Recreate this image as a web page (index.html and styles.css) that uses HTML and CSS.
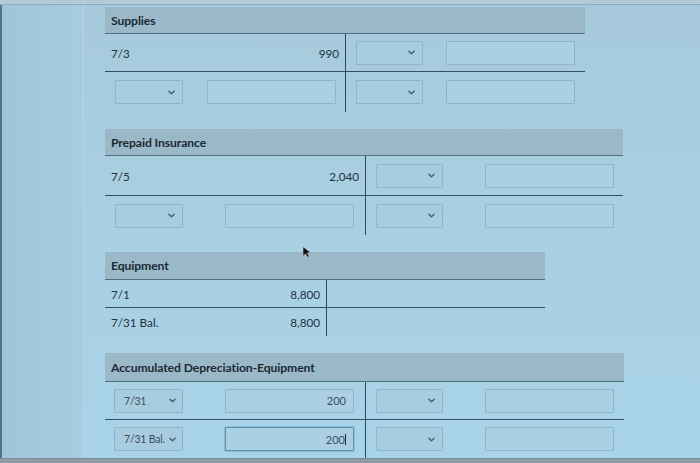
FILE: index.html
```html
<!DOCTYPE html>
<html>
<head>
<meta charset="utf-8">
<link rel="stylesheet" href="styles.css">
</head>
<body>
<div class="screen">
  <div class="topbar"></div>
  <div class="frame">
    <div class="rail"></div>
    <main class="content">

      <section class="acct acct-supplies">
        <div class="head">Supplies</div>
        <div class="cell left text"><span>7/3</span><span>990</span></div>
        <div class="cell right ctrls">
          <div class="sel"><span></span><svg viewBox="0 0 8 5"><path d="M1 1l3 3 3-3"/></svg></div>
          <div class="inp"></div>
        </div>
        <div class="cell left ctrls last">
          <div class="sel"><span></span><svg viewBox="0 0 8 5"><path d="M1 1l3 3 3-3"/></svg></div>
          <div class="inp"></div>
        </div>
        <div class="cell right ctrls last">
          <div class="sel"><span></span><svg viewBox="0 0 8 5"><path d="M1 1l3 3 3-3"/></svg></div>
          <div class="inp"></div>
        </div>
      </section>

      <section class="acct acct-prepaid">
        <div class="head">Prepaid Insurance</div>
        <div class="cell left text"><span>7/5</span><span>2,040</span></div>
        <div class="cell right ctrls">
          <div class="sel"><span></span><svg viewBox="0 0 8 5"><path d="M1 1l3 3 3-3"/></svg></div>
          <div class="inp"></div>
        </div>
        <div class="cell left ctrls last">
          <div class="sel"><span></span><svg viewBox="0 0 8 5"><path d="M1 1l3 3 3-3"/></svg></div>
          <div class="inp"></div>
        </div>
        <div class="cell right ctrls last">
          <div class="sel"><span></span><svg viewBox="0 0 8 5"><path d="M1 1l3 3 3-3"/></svg></div>
          <div class="inp"></div>
        </div>
      </section>

      <section class="acct acct-equip">
        <div class="head">Equipment</div>
        <div class="cell left text"><span>7/1</span><span>8,800</span></div>
        <div class="cell right"></div>
        <div class="cell left text last"><span>7/31 Bal.</span><span>8,800</span></div>
        <div class="cell right last"></div>
        <svg class="pointer" viewBox="0 0 10 14"><path d="M1 1v11l3-3 2 4 2-1-2-4h4z"/></svg>
      </section>

      <section class="acct acct-accum">
        <div class="head">Accumulated Depreciation-Equipment</div>
        <div class="cell left ctrls">
          <div class="sel"><span>7/31</span><svg viewBox="0 0 8 5"><path d="M1 1l3 3 3-3"/></svg></div>
          <div class="inp num">200</div>
        </div>
        <div class="cell right ctrls">
          <div class="sel"><span></span><svg viewBox="0 0 8 5"><path d="M1 1l3 3 3-3"/></svg></div>
          <div class="inp"></div>
        </div>
        <div class="cell left ctrls last">
          <div class="sel"><span>7/31 Bal.</span><svg viewBox="0 0 8 5"><path d="M1 1l3 3 3-3"/></svg></div>
          <div class="inp num focus">200<i class="caret"></i></div>
        </div>
        <div class="cell right ctrls last">
          <div class="sel"><span></span><svg viewBox="0 0 8 5"><path d="M1 1l3 3 3-3"/></svg></div>
          <div class="inp"></div>
        </div>
      </section>

    </main>
  </div>
  <div class="bottombar"></div>
</div>
</body>
</html>
```

FILE: styles.css
```css
* { box-sizing: border-box; }

html, body {
  margin: 0;
  padding: 0;
  width: 700px;
  height: 463px;
  overflow: hidden;
}

body {
  font-family: Lato, "Open Sans", "Liberation Sans", sans-serif;
  color: #1a2a34;
  background: #a8cfe2;
}

.screen {
  width: 700px;
  height: 463px;
  display: flex;
  flex-direction: column;
  background: linear-gradient(180deg, #a6cadc 0%, #a9d0e3 55%, #a8d3e9 100%);
}

.topbar {
  height: 5px;
  flex: none;
  background: #b3cbd7;
  border-bottom: 1px solid #8eaab8;
}

.frame {
  flex: 1;
  display: flex;
  min-height: 0;
}

.rail {
  width: 84px;
  flex: none;
  border-left: 2px solid #4f778c;
  border-right: 1px solid #b9d8e6;
  background: linear-gradient(90deg, #a1c5d8 0%, #a7cce0 100%);
}

.content {
  flex: 1;
  padding: 2px 0 0 21px;
  display: flex;
  flex-direction: column;
  gap: 17px;
}

.bottombar {
  height: 5px;
  flex: none;
  background: #8d9ca4;
  border-top: 1px solid #7d8d95;
}

/* ---- T-account ---- */
.acct {
  position: relative;
  display: grid;
  grid-template-columns: var(--lw) var(--rw);
  --sel-w: 67px;
  --inp-w: 129px;
  --gap: 42px;
}

.head {
  grid-column: 1 / 3;
  height: 27px;
  display: flex;
  align-items: center;
  padding-left: 6px;
  font-weight: 700;
  font-size: 12.2px;
  background: #9ab8c7;
  border-bottom: 1px solid #4f6e7e;
  letter-spacing: -0.1px;
}

.cell {
  display: flex;
  align-items: center;
  font-size: 11.7px;
  color: #22333d;
  border-bottom: 1px solid #34515f;
  white-space: nowrap;
}

.cell.last { border-bottom: none; }

.cell.right { border-left: 1px solid #2e4957; }

.cell.text {
  justify-content: space-between;
  padding: 0 6px 0 6px;
}

.cell.ctrls {
  padding-left: 10px;
  gap: var(--gap);
}

.sel {
  width: var(--sel-w);
  height: 24px;
  border: 1px solid #8fb5c7;
  background: #a9cde0;
  border-radius: 1px;
  display: flex;
  align-items: center;
  justify-content: space-between;
  padding: 0 7px 0 9px;
  font-size: 10.5px;
  color: #3a4f5b;
  white-space: nowrap;
}

.sel svg {
  flex: none;
  width: 7px;
  height: 5px;
  fill: none;
  stroke: #3a5f75;
  stroke-width: 1.5;
  stroke-linecap: round;
  stroke-linejoin: round;
}

.inp {
  width: var(--inp-w);
  height: 24px;
  border: 1px solid #8fb5c7;
  background: #acd0e3;
  border-radius: 1px;
  font-size: 11px;
  color: #3a4f5b;
}

.inp.num {
  display: flex;
  align-items: center;
  justify-content: flex-end;
  padding-right: 7px;
}

.inp.focus {
  border-color: #5c93b5;
  box-shadow: 0 0 0 1px #8ebcd6;
}

.caret {
  display: inline-block;
  width: 1px;
  height: 11px;
  background: #1a2a34;
}

/* per-account sizes */
.acct-supplies { --lw: 240px; --rw: 240px; }
.acct-supplies .cell { height: 38px; }
.acct-supplies .cell.last { height: 40px; }
.acct-supplies .cell.right.ctrls { --gap: 23px; }
.acct-supplies .cell.left.ctrls { --gap: 24px; }
.acct-supplies .cell.left.ctrls .sel { width: 68px; }

.acct-prepaid { --lw: 260px; --rw: 258px; }
.acct-prepaid .cell { height: 40px; }
.acct-prepaid .cell.last { height: 39px; }
.acct-prepaid .cell.left.ctrls .sel { width: 68px; }

.acct-equip { --lw: 221px; --rw: 219px; }
.acct-equip .head { height: 28px; }
.acct-equip .cell { height: 28px; }

.acct-accum { --lw: 260px; --rw: 259px; }
.acct-accum .head { height: 29px; }
.acct-accum .cell { height: 38px; }
.acct-accum .cell.left.ctrls { padding-left: 9px; --gap: 42px; }
.acct-accum .cell.left.ctrls .sel { width: 69px; padding: 0 6px 0 9px; letter-spacing: -0.2px; }

.pointer {
  position: absolute;
  left: 197px;
  top: -6px;
  width: 9px;
  height: 12px;
  fill: #111;
  stroke: #ddd;
  stroke-width: 0.5;
}
```
